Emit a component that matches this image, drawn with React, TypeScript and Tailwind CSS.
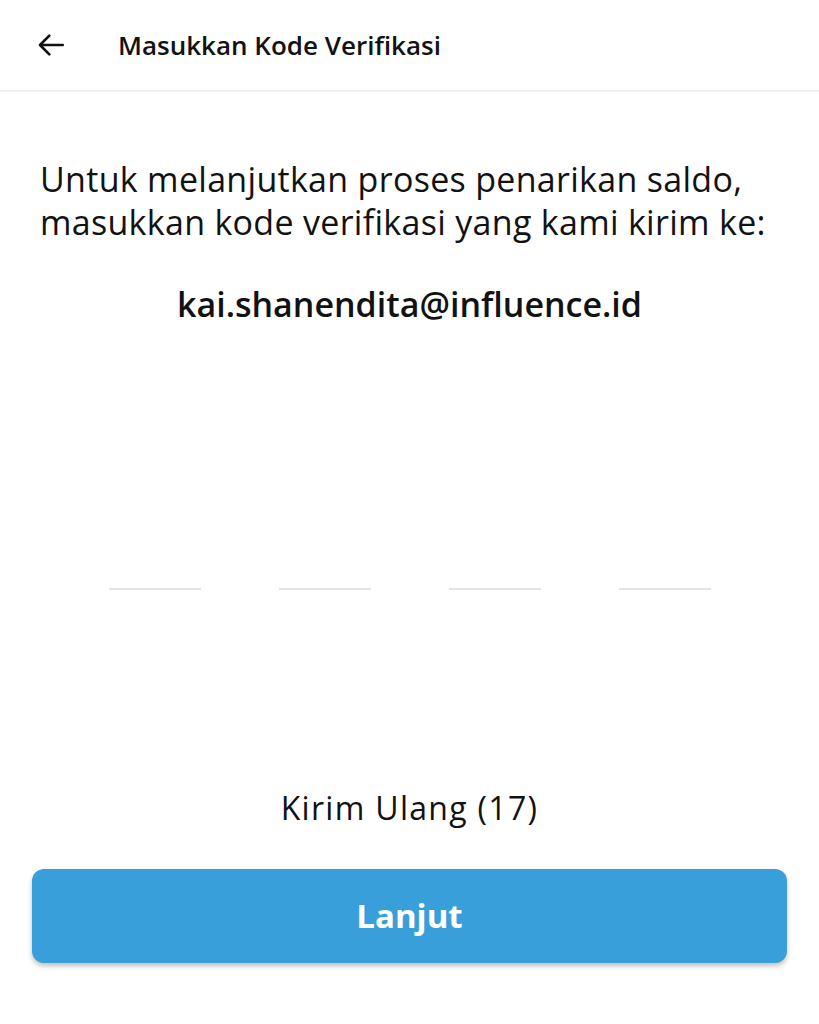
import React from "react";

export default function App() {
  const slots = [0, 1, 2, 3];
  return (
    <div className="flex flex-col h-[1024px] bg-white text-[#121212] font-['Open_Sans',sans-serif]">
      <header className="flex items-center h-[92px] border-b-2 border-[#f0f0f0] px-[36px]">
        <svg width="32" height="32" viewBox="0 0 24 24" fill="none" stroke="#111" strokeWidth="2" strokeLinecap="round" strokeLinejoin="round">
          <path d="M20 12H4" />
          <path d="M10 5l-7 7 7 7" />
        </svg>
        <h1 className="ml-[50px] text-[26px] leading-[32px] font-semibold">Masukkan Kode Verifikasi</h1>
      </header>

      <p className="mt-[66px] px-[40px] text-[34px] leading-[43px] font-medium tracking-[0.3px] whitespace-nowrap">
        Untuk melanjutkan proses penarikan saldo,
        <br />
        masukkan kode verifikasi yang kami kirim ke:
      </p>
      <p className="mt-[38px] text-center text-[34px] leading-[44px] font-semibold">kai.shanendita@influence.id</p>

      <div className="mt-[262px] flex justify-center gap-[78px]">
        {slots.map((s) => (
          <div key={s} className="w-[92px] h-[2px] bg-[#e3e3e3]" />
        ))}
      </div>

      <p className="mt-[198px] text-center text-[32px] leading-[40px] font-medium tracking-[1.3px]">Kirim Ulang (17)</p>

      <div className="px-[32px] mt-[41px]">
        <button className="w-full h-[94px] rounded-[12px] bg-[#389fda] text-white text-[33px] font-bold shadow-[0_3px_5px_rgba(0,0,0,0.25)]">
          Lanjut
        </button>
      </div>
    </div>
  );
}
